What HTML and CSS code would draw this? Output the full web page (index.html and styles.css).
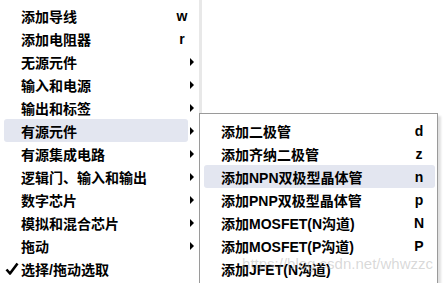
FILE: index.html
```html
<!DOCTYPE html>
<html lang="zh-CN">
<head>
  <meta charset="UTF-8">
  <title>右键菜单</title>
  <link rel="stylesheet" href="styles.css">
</head>
<body>

  <!-- Main context menu -->
  <div class="menu">
    <div class="row"><div class="cell"><span class="gutter"></span><span class="label">添加导线</span><span class="key">w</span></div></div>
    <div class="row"><div class="cell"><span class="gutter"></span><span class="label">添加电阻器</span><span class="key">r</span></div></div>
    <div class="row"><div class="cell"><span class="gutter"></span><span class="label">无源元件</span></div><span class="arrow"></span></div>
    <div class="row"><div class="cell"><span class="gutter"></span><span class="label">输入和电源</span></div><span class="arrow"></span></div>
    <div class="row"><div class="cell"><span class="gutter"></span><span class="label">输出和标签</span></div><span class="arrow"></span></div>
    <div class="row"><div class="cell active"><span class="gutter"></span><span class="label">有源元件</span></div><span class="arrow"></span></div>
    <div class="row"><div class="cell"><span class="gutter"></span><span class="label">有源集成电路</span></div><span class="arrow"></span></div>
    <div class="row"><div class="cell"><span class="gutter"></span><span class="label">逻辑门、输入和输出</span></div><span class="arrow"></span></div>
    <div class="row"><div class="cell"><span class="gutter"></span><span class="label">数字芯片</span></div><span class="arrow"></span></div>
    <div class="row"><div class="cell"><span class="gutter"></span><span class="label">模拟和混合芯片</span></div><span class="arrow"></span></div>
    <div class="row"><div class="cell"><span class="gutter"></span><span class="label">拖动</span></div><span class="arrow"></span></div>
    <div class="row">
      <div class="cell">
        <span class="gutter check">
          <svg width="14" height="13" viewBox="0 0 14 13"><path d="M1.5 7.5 L5 11.5 L12.5 1.5" fill="none" stroke="#000" stroke-width="2.6" stroke-linejoin="round"/></svg>
        </span>
        <span class="label">选择/拖动选取</span>
      </div>
    </div>
  </div>

  <!-- Submenu for 有源元件 -->
  <div class="submenu">
    <div class="sub-item"><span class="label">添加二极管</span><span class="key">d</span></div>
    <div class="sub-item"><span class="label">添加齐纳二极管</span><span class="key">z</span></div>
    <div class="sub-item active"><span class="label">添加NPN双极型晶体管</span><span class="key">n</span></div>
    <div class="sub-item"><span class="label">添加PNP双极型晶体管</span><span class="key">p</span></div>
    <div class="sub-item"><span class="label">添加MOSFET(N沟道)</span><span class="key">N</span></div>
    <div class="sub-item"><span class="label">添加MOSFET(P沟道)</span><span class="key">P</span></div>
    <div class="sub-item"><span class="label">添加JFET(N沟道)</span><span class="key"></span></div>
  </div>

  <div class="watermark">https://blog.csdn.net/whwzzc</div>

</body>
</html>
```

FILE: styles.css
```css
/* Global */
body {
  margin: 0;
  padding: 0;
  background: #fff;
  color: #000;
  font-family: 'Liberation Sans', 'Noto Sans CJK SC', sans-serif;
  font-size: 14px;
  font-weight: bold;
  height: 283px;
  overflow: hidden;
}

/* Main menu */
.menu {
  width: 202px;
  height: 283px;
  padding-top: 4px;
  box-sizing: border-box;
  border-right: 3px solid #e8e8e8;
  background: #fff;
  overflow: hidden;
}

.row {
  display: flex;
  align-items: center;
  height: 23px;
}

.cell {
  display: flex;
  align-items: center;
  margin-left: 4px;
  width: 184px;
  height: 23px;
  border-radius: 3px;
}

.cell.active {
  background: #e3e6f0;
}

.gutter {
  width: 17px;
  flex: none;
}

.check {
  display: flex;
  align-items: center;
  padding-left: 1px;
  box-sizing: border-box;
}

.label {
  flex: 1;
  white-space: nowrap;
}

.cell .key {
  width: 12px;
  text-align: center;
}

.arrow {
  margin-left: 2px;
  width: 0;
  height: 0;
  border-top: 4px solid transparent;
  border-bottom: 4px solid transparent;
  border-left: 4px solid #000;
}

/* Submenu */
.submenu {
  position: absolute;
  left: 199px;
  top: 113px;
  width: 239px;
  height: 170px;
  padding-top: 5px;
  box-sizing: border-box;
  background: #fff;
  border: 1px solid #9a9a9a;
  border-bottom: none;
  box-shadow: 3px 3px 2px rgba(0, 0, 0, 0.12);
  overflow: hidden;
}

.sub-item {
  display: flex;
  align-items: center;
  height: 23px;
  margin: 0 2px 0 4px;
  padding-left: 17px;
  border-radius: 3px;
}

.sub-item.active {
  background: #e3e6f0;
}

.sub-item .key {
  width: 12px;
  margin-right: 10px;
  text-align: center;
}

/* Watermark */
.watermark {
  position: absolute;
  right: 11px;
  top: 255px;
  font-family: 'Liberation Sans', sans-serif;
  font-weight: normal;
  font-size: 15px;
  color: rgba(170, 170, 170, 0.45);
}
```
